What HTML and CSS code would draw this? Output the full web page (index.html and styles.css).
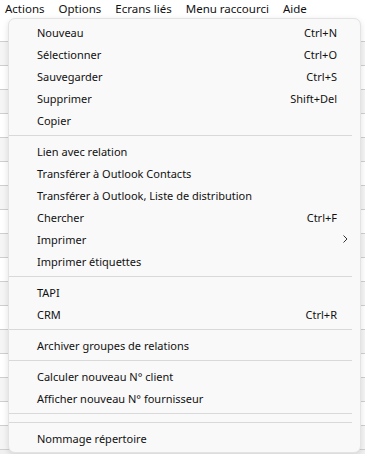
FILE: index.html
```html
<!DOCTYPE html>
<html lang="fr">
<head>
    <meta charset="UTF-8">
    <title>Actions</title>
    <link rel="stylesheet" href="styles.css">
</head>
<body>
    <!-- Menu bar -->
    <div class="menubar">
        <span class="menubar-item">Actions</span>
        <span class="menubar-item">Options</span>
        <span class="menubar-item">Ecrans liés</span>
        <span class="menubar-item">Menu raccourci</span>
        <span class="menubar-item">Aide</span>
    </div>

    <!-- Application behind the menu -->
    <div class="app">
        <div class="app-row"></div>
        <div class="app-row"></div>
        <div class="app-row"></div>
        <div class="app-row"></div>
        <div class="app-row"></div>
        <div class="app-row"></div>
        <div class="app-row"></div>
        <div class="app-row"></div>
        <div class="app-row"></div>
        <div class="app-row"></div>
        <div class="app-row"></div>
        <div class="app-row"></div>
        <div class="app-row"></div>
        <div class="app-row"></div>
        <div class="app-row"></div>
        <div class="app-row"></div>
        <div class="app-row"></div>
        <div class="app-row"></div>
    </div>

    <!-- Dropdown "Actions" -->
    <div class="dropdown">
        <div class="item"><span class="label">Nouveau</span><span class="shortcut">Ctrl+N</span><span class="sub"></span></div>
        <div class="item"><span class="label">Sélectionner</span><span class="shortcut">Ctrl+O</span><span class="sub"></span></div>
        <div class="item"><span class="label">Sauvegarder</span><span class="shortcut">Ctrl+S</span><span class="sub"></span></div>
        <div class="item"><span class="label">Supprimer</span><span class="shortcut">Shift+Del</span><span class="sub"></span></div>
        <div class="item"><span class="label">Copier</span><span class="shortcut"></span><span class="sub"></span></div>
        <div class="separator"></div>
        <div class="item"><span class="label">Lien avec relation</span><span class="shortcut"></span><span class="sub"></span></div>
        <div class="item"><span class="label">Transférer à Outlook Contacts</span><span class="shortcut"></span><span class="sub"></span></div>
        <div class="item"><span class="label">Transférer à Outlook, Liste de distribution</span><span class="shortcut"></span><span class="sub"></span></div>
        <div class="item"><span class="label">Chercher</span><span class="shortcut">Ctrl+F</span><span class="sub"></span></div>
        <div class="item"><span class="label">Imprimer</span><span class="shortcut"></span>
            <span class="sub"><svg width="5" height="8" viewBox="0 0 5 8"><path d="M0.5 0.5 L4 4 L0.5 7.5" fill="none" stroke="#333" stroke-width="1"/></svg></span>
        </div>
        <div class="item"><span class="label">Imprimer étiquettes</span><span class="shortcut"></span><span class="sub"></span></div>
        <div class="separator"></div>
        <div class="item"><span class="label">TAPI</span><span class="shortcut"></span><span class="sub"></span></div>
        <div class="item"><span class="label">CRM</span><span class="shortcut">Ctrl+R</span><span class="sub"></span></div>
        <div class="separator"></div>
        <div class="item"><span class="label">Archiver groupes de relations</span><span class="shortcut"></span><span class="sub"></span></div>
        <div class="separator"></div>
        <div class="item"><span class="label">Calculer nouveau N° client</span><span class="shortcut"></span><span class="sub"></span></div>
        <div class="item"><span class="label">Afficher nouveau N° fournisseur</span><span class="shortcut"></span><span class="sub"></span></div>
        <div class="separator"></div>
        <div class="separator"></div>
        <div class="item"><span class="label">Nommage répertoire</span><span class="shortcut"></span><span class="sub"></span></div>
    </div>
</body>
</html>
```

FILE: styles.css
```css
/* General */
body {
    margin: 0;
    padding: 0;
    font-family: 'Noto Sans', 'Liberation Sans', sans-serif;
    font-size: 11px;
    color: #111;
    background: #f0f0f0;
    overflow: hidden;
    height: 454px;
}

/* Menu bar */
.menubar {
    display: flex;
    gap: 14px;
    height: 18px;
    padding-left: 5px;
    align-items: center;
    background: #fff;
    font-size: 11.5px;
}

.menubar-item {
    line-height: 16px;
}

/* Window content under the dropdown */
.app {
    display: flex;
    flex-direction: column;
}

.app-row {
    height: 23px;
    border-bottom: 1px solid #cfcfcf;
    background: #fff;
}

.app-row:nth-child(even) {
    background: #f5f5f5;
}

/* Dropdown */
.dropdown {
    position: absolute;
    top: 18px;
    left: 8px;
    width: 351px;
    padding: 2px 0 3px;
    display: flex;
    flex-direction: column;
    background: #f9f9f9;
    border: 1px solid #e3e3e3;
    border-radius: 7px;
    box-shadow: 0 2px 6px rgba(0, 0, 0, 0.12);
}

.item {
    display: flex;
    align-items: center;
    height: 22px;
    padding-left: 28px;
}

.label {
    flex: 1;
    white-space: nowrap;
}

.shortcut {
    white-space: nowrap;
}

.sub {
    width: 23px;
    display: flex;
    align-items: center;
    padding-left: 6px;
    box-sizing: border-box;
}

.separator {
    height: 1px;
    margin: 4px 8px 4px 0;
    background: #d9d9d9;
}
```
